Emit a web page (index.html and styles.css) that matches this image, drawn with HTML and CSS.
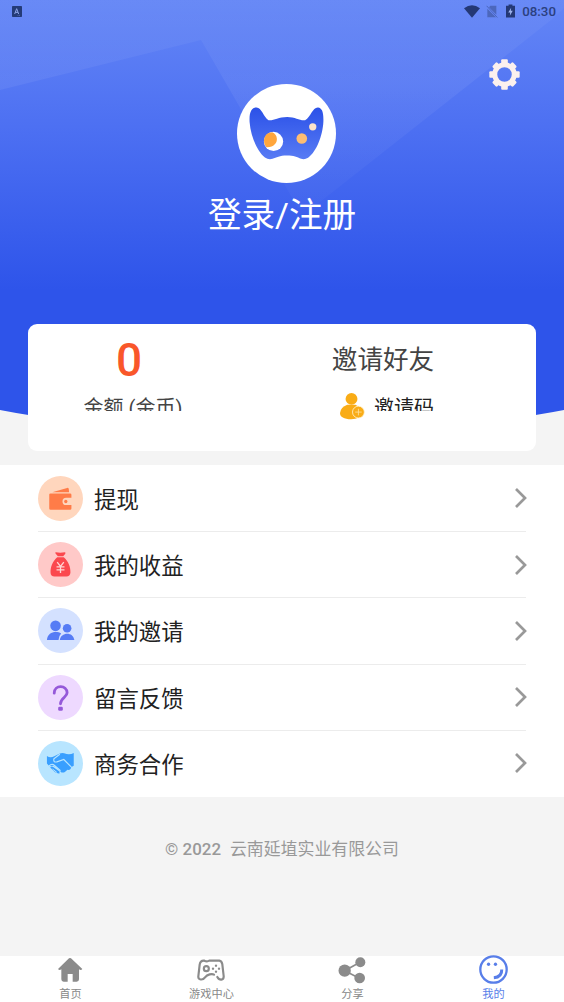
FILE: index.html
```
<!DOCTYPE html>
<html lang="zh-CN">
<head>
<meta charset="utf-8">
<title>我的</title>
<link rel="stylesheet" href="styles.css">
</head>
<body>
<div class="screen">
  <section class="hero">
    <svg class="hero-bg" viewBox="0 0 564 420" preserveAspectRatio="none">
      <defs>
        <linearGradient id="sky" x1="0" y1="0" x2="0" y2="1">
          <stop offset="0" stop-color="#6486f6"/><stop offset=".3" stop-color="#4d70f2"/><stop offset=".69" stop-color="#2e54ea"/><stop offset="1" stop-color="#2e54ea"/>
        </linearGradient>
        <linearGradient id="beam" x1="0" y1="0" x2="0" y2="1">
          <stop offset="0" stop-color="#fff" stop-opacity=".03"/><stop offset=".4" stop-color="#fff" stop-opacity=".06"/><stop offset="1" stop-color="#fff" stop-opacity=".02"/>
        </linearGradient>
      </defs>
      <path fill="url(#sky)" d="M0 0H564V410Q536 415.500 500 420H64Q28 415.500 0 410Z"/>
      <path fill="url(#beam)" d="M0 90 201 40 298 208Q307 211 320 202L551 20 564 8V0H0Z"/>
    </svg>
    <header class="status">
      <svg class="app-badge" viewBox="0 0 30 33"><rect width="30" height="33" rx="2" fill="#243b78"/><path d="M8 24 14 8 20 24M10 19H18" fill="none" stroke="#8ea5e8" stroke-width="3"/><path d="M17 28H19M22 28H24" stroke="#8ea5e8" stroke-width="2"/></svg>
      <div class="status-right">
        <svg class="wifi" viewBox="0 0 48 38"><path fill="#243875" d="M0 9Q24-9 48 9L24 38Z"/></svg>
        <svg class="sim" viewBox="0 0 36 38"><path fill="#4c67bc" d="M13 2H31V29L9 6ZM4 11 30 36H4Z"/><path d="M2 2 34 37" stroke="#4c67bc" stroke-width="3"/></svg>
        <svg class="battery" viewBox="0 0 28 41"><path fill="#243875" d="M8 0H20V4H28V41H0V4H8Z"/><path fill="#9fb4ee" d="M16 10 7 25H13L12 35 21 20H15Z"/></svg>
        <span class="clock">08:30</span>
      </div>
    </header>
    <div class="settings">
      <svg class="gear" viewBox="-47 -47 94 94">
        <g fill="#fbf0ee"><path fill-rule="evenodd" d="M0-37A37 37 0 1 1 0 37 37 37 0 1 1 0-37ZM0-22A22 22 0 1 0 0 22 22 22 0 1 0 0-22Z"/>
        <rect x="-10" y="-46" width="20" height="16" rx="3"/><rect x="-10" y="30" width="20" height="16" rx="3"/><rect x="-46" y="-10" width="16" height="20" rx="3"/><rect x="30" y="-10" width="16" height="20" rx="3"/>
        <g transform="rotate(45)"><rect x="-10" y="-44" width="20" height="14" rx="4"/><rect x="-10" y="30" width="20" height="14" rx="4"/><rect x="-44" y="-10" width="14" height="20" rx="4"/><rect x="30" y="-10" width="14" height="20" rx="4"/></g></g>
      </svg>
    </div>
    <div class="profile">
      <svg class="avatar" viewBox="32 25 298 298">
        <defs><linearGradient id="mask" x1="0" y1="0" x2="0" y2="1"><stop offset="0" stop-color="#2b51e8"/><stop offset="1" stop-color="#587bf4"/></linearGradient></defs>
        <circle cx="181" cy="174" r="149" fill="#fff"/>
        <path fill="url(#mask)" d="M90 96C106 95 111 124 127 134C143 136 155 124 183 124C209 124 220 136 237 134C255 124 259 95 276 96C288 98 293 109 292 139C290 181 271 230 246 247Q235 254 225 250C213 245 203 240 182 240C160 240 151 246 139 250Q127 254 116 246C92 227 73 181 70 140C68 110 76 96 90 96Z"/>
        <circle cx="142" cy="198" r="29" fill="#fff"/>
        <path fill="#ffa63d" d="M138 170C155 177 156 198 145 207Q137 216 120 215C107 199 113 170 138 170Z"/>
        <circle cx="227" cy="189" r="16" fill="#fdbd73"/><circle cx="260" cy="154" r="11" fill="#fde3ca"/>
      </svg>
      <div class="login">登录/注册</div>
    </div>
    <div class="card">
      <div class="card-col">
        <div class="amount">0</div>
        <div class="caption gold">金额 (金币)</div>
      </div>
      <div class="card-col invite">
        <div class="invite-title">邀请好友</div>
        <div class="invite-code">
          <svg class="friend" viewBox="0 0 76 82"><g fill="#f9ac16"><circle cx="35" cy="18" r="18"/><path d="M22 36H47Q65 43 66 61 62 80 34 80C12 80 0 73 0 61Q2 43 22 36Z"/></g><circle cx="56" cy="58" r="18" fill="#f9ac16" stroke="#fff3d2" stroke-width="2.500"/><path d="M46 58H66M56 48V68" stroke="#ffe2a0" stroke-width="2.500"/></svg>
          <div class="caption code">邀请码</div>
        </div>
      </div>
    </div>
  </section>

  <main class="menu">
    <div class="row">
      <svg class="icon" viewBox="0 0 136 136"><circle cx="68" cy="68" r="68" fill="#ffd6bd"/><path fill="#ff7c48" d="M43 49 88 36Q92 35 93 39L94 49ZM34 56Q34 53 38 53H97Q101 53 101 57V66H85A11 11 0 0 0 85 88H101V98Q101 102 97 102H38Q34 102 34 98Z"/><circle cx="84" cy="77" r="5" fill="#ff7c48"/></svg>
      <div class="row-body"><span>提现</span><svg class="arrow" viewBox="0 0 14 22"><path d="M2 2 11 11 2 20"/></svg></div>
    </div>
    <div class="row">
      <svg class="icon" viewBox="0 0 136 136"><circle cx="68" cy="68" r="68" fill="#ffc9c8"/><path fill="#fb484e" d="M54 31Q67 34 81 31 85 31 82 36L76 43H60L53 35Q51 31 54 31ZM58 46H78C91 57 99 76 98 93Q97 104 86 104H50Q38 104 38 93C37 76 45 57 58 46Z"/><path d="M58 61 68 74 78 61M56 75H80M56 84H80M68 74V94" fill="none" stroke="#ffd4d2" stroke-width="4"/></svg>
      <div class="row-body"><span>我的收益</span><svg class="arrow" viewBox="0 0 14 22"><path d="M2 2 11 11 2 20"/></svg></div>
    </div>
    <div class="row">
      <svg class="icon" viewBox="0 0 136 136"><circle cx="68" cy="68" r="68" fill="#d4e1ff"/><g fill="#567cf5"><circle cx="53" cy="54" r="16"/><circle cx="88" cy="61" r="13"/><path d="M27 97C29 71 56 69 70 77Q62 85 62 97ZM66 97C68 73 106 69 110 97Z"/></g></svg>
      <div class="row-body"><span>我的邀请</span><svg class="arrow" viewBox="0 0 14 22"><path d="M2 2 11 11 2 20"/></svg></div>
    </div>
    <div class="row">
      <svg class="icon" viewBox="0 0 136 136"><circle cx="68" cy="68" r="68" fill="#eed9ff"/><path d="M49 55C49 29 88 29 88 54C88 67 68 70 68 87" fill="none" stroke="#9559d9" stroke-width="8.500" stroke-linecap="round"/><rect x="61" y="96" width="14" height="12" rx="4" fill="#9559d9"/></svg>
      <div class="row-body"><span>留言反馈</span><svg class="arrow" viewBox="0 0 14 22"><path d="M2 2 11 11 2 20"/></svg></div>
    </div>
    <div class="row">
      <svg class="icon" viewBox="0 0 136 136"><circle cx="68" cy="68" r="68" fill="#b8e5ff"/><path fill="#399fff" d="M27 45Q37 52 49 46L60 41Q69 34 79 37 95 44 108 36V75L100 79Q99 89 89 87L83 92Q77 97 71 95L56 80 47 75 34 76 27 68Z"/><path d="M66 40 48 54Q46 66 57 63L78 56 101 79" fill="none" stroke="#b8e5ff" stroke-width="3.500"/><path d="M32 76 38 72Q44 69 50 74L68 90" fill="none" stroke="#b8e5ff" stroke-width="3.500"/><path fill="#399fff" d="M37 80Q41 75 47 79L65 92V98Q58 99 51 94Z"/><path d="M44 85 57 95" stroke="#b8e5ff" stroke-width="3"/></svg>
      <div class="row-body"><span>商务合作</span><svg class="arrow" viewBox="0 0 14 22"><path d="M2 2 11 11 2 20"/></svg></div>
    </div>
  </main>

  <footer class="copyright"><span class="year">© 2022</span><span>云南延埴实业有限公司</span></footer>

  <nav class="tabs">
    <div class="tab">
      <svg viewBox="0 0 84 84"><path fill="#8b8b8b" d="M39 7Q42 5 45 7L79 39Q75 44 69 40V70Q69 77 62 77H50V54H35V77H23Q16 77 16 70V40Q10 44 6 39Z"/></svg>
      <span>首页</span>
    </div>
    <div class="tab">
      <svg viewBox="0 0 84 84"><g fill="none" stroke="#8b8b8b" stroke-width="6.500" stroke-linecap="round"><path d="M37 14H67Q74 15 76 25L80 60C81 74 67 74 61 63M51 56C45 52 31 55 24 64 17 74 3 72 4 61L8 26Q10 13 22 14Q30 18 37 14"/><circle cx="28" cy="38" r="7.500"/></g><g fill="#8b8b8b"><circle cx="57" cy="29" r="3.500"/><circle cx="57" cy="47" r="3.500"/><circle cx="48" cy="38" r="3.500"/><circle cx="66" cy="38" r="3.500"/></g></svg>
      <span>游戏中心</span>
    </div>
    <div class="tab">
      <svg viewBox="0 0 84 84"><path d="M66 19 20 44 64 67" fill="none" stroke="#8b8b8b" stroke-width="5"/><g fill="#8b8b8b"><circle cx="20" cy="44" r="18.500"/><circle cx="67" cy="19" r="15"/><circle cx="65" cy="66" r="16"/></g></svg>
      <span>分享</span>
    </div>
    <div class="tab active">
      <svg class="face" viewBox="0 0 88 88"><g fill="none" stroke="#587ee9"><circle cx="44" cy="44" r="40" stroke-width="7"/><path d="M69 44Q70 67 45 69" stroke-width="9"/></g><g fill="#587ee9"><circle cx="29" cy="28" r="5"/><circle cx="50" cy="28" r="5"/></g></svg>
      <span>我的</span>
    </div>
  </nav>
</div>
</body>
</html>
```

FILE: styles.css
```
* { box-sizing: border-box; }
body {
  margin: 0;
  background: #f4f4f4;
  font-family: Roboto, "Noto Sans CJK SC", sans-serif;
}
svg { display: block; flex: none; }
.screen {
  width: 564px;
  height: 1002px;
  display: flex;
  flex-direction: column;
  overflow: hidden;
}
.hero {
  position: relative;
  height: 465px;
  flex: none;
}
.hero-bg {
  position: absolute;
  left: 0;
  top: 0;
  width: 564px;
  height: 420px;
  z-index: -1;
}
.status {
  height: 24px;
  padding: 0 8px 2px 12px;
  display: flex;
  align-items: center;
  justify-content: space-between;
}
.app-badge { width: 10px; height: 11px; }
.status-right { display: flex; align-items: center; height: 22px; }
.wifi { width: 16px; height: 13px; margin-right: 6px; }
.sim { width: 12px; height: 13px; margin-right: 8px; }
.battery { width: 9px; height: 14px; margin-right: 7px; }
.clock { font-size: 13.3px; font-weight: 500; line-height: 22px; padding-top: 1px; color: #2b407f; }
.settings {
  height: 60px;
  padding: 35px 44px 0 0;
  display: flex;
  justify-content: flex-end;
}
.gear { width: 31px; height: 31px; }
.profile {
  height: 240px;
  display: flex;
  flex-direction: column;
  align-items: center;
}
.avatar { width: 99px; height: 99px; margin: .4px 0 0 9px; }
.login {
  margin-top: 10px;
  font-size: 33.600px;
  line-height: 46px;
  color: #fff;
}
.card {
  margin: 0 28px;
  height: 127px;
  border-radius: 9px;
  background: #fff;
  display: flex;
  padding-top: 12px;
}
.card-col { display: flex; flex-direction: column; align-items: center; width: 202px; }
.invite { width: 306px; }
.amount {
  height: 48px;
  font-size: 46px;
  line-height: 48px;
  font-weight: 500;
  color: #f9572a;
}
.caption {
  height: 16px;
  font-size: 20px;
  line-height: 26px;
  overflow: hidden;
}
.gold { margin-top: 11px; margin-left: 8px; color: #444; }
.invite-title { font-size: 25.600px; line-height: 48px; color: #444; margin-bottom: -2px; }
.invite-code { display: flex; margin-top: 11px; padding-left: 8px; }
.friend { width: 25px; height: 27px; margin-right: 9px; }
.code { margin-top: 2px; color: #222; }
.menu {
  height: 332px;
  flex: none;
  display: grid;
  grid-template-rows: 67px repeat(4, 1fr);
  padding: 0 38px;
  background: #fff;
}
.row { display: flex; align-items: center; border-bottom: 1px solid #ececec; }
.row:last-child { border-bottom-color: transparent; }
.icon { width: 45px; height: 45px; margin-right: 11px; }
.row-body {
  flex: 1;
  display: flex;
  align-items: center;
  justify-content: space-between;
  font-size: 22.400px;
  line-height: 30px;
  color: #222;
}
.row-body span { padding-top: 3px; }
.arrow { width: 14px; height: 22px; margin-right: -2px; }
.arrow path { fill: none; stroke: #999; stroke-width: 2.700; }
.copyright {
  flex: 1;
  padding-top: 40px;
  display: flex;
  justify-content: center;
  gap: 9px;
  font-size: 16.900px;
  line-height: 25px;
  color: #999;
}
.year { font-weight: 500; }
.tabs {
  height: 46px;
  flex: none;
  display: grid;
  grid-template-columns: repeat(4, 1fr);
  background: #fff;
}
.tab {
  display: flex;
  flex-direction: column;
  align-items: center;
  color: #888;
  font-size: 11.200px;
  line-height: 16px;
}
.tab svg { width: 28px; height: 28px; margin: 0 1px 3px 0; }
.tab .face { height: 29px; width: 29px; margin: -1px 0 3px; }
.active { color: #587ee9; }
```
